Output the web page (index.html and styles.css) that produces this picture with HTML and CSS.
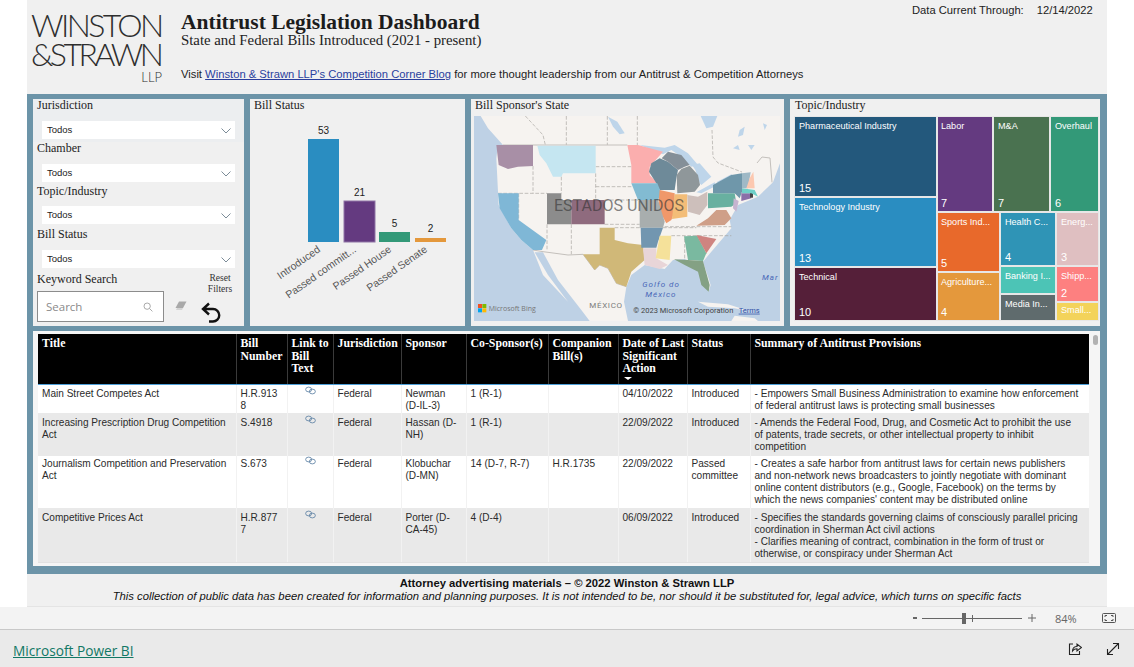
FILE: index.html
```html
<!DOCTYPE html>
<html lang="en">

<head>
    <meta charset="UTF-8">
    <meta name="viewport" content="width=device-width, initial-scale=1.0">
    <title>Antitrust Legislation Dashboard</title>
    <link rel="stylesheet" href="styles.css">
</head>

<body>
    <div class="report">
        <header class="top">
            <div class="logo">
                <div class="logo-line">WINSTON</div>
                <div class="logo-line logo-two">&amp;STRAWN</div>
                <div class="logo-llp">LLP</div>
            </div>
            <div class="heading">
                <h1>Antitrust Legislation Dashboard</h1>
                <h2>State and Federal Bills Introduced (2021 - present)</h2>
                <p class="visit">Visit <a href="#">Winston &amp; Strawn LLP's Competition Corner Blog</a> for more thought leadership from our Antitrust &amp; Competition Attorneys</p>
            </div>
            <div class="current"><span>Data Current Through:</span><span>12/14/2022</span></div>
        </header>

        <main class="frame">
            <div class="row-top">
                <section class="panel slicers">
                    <div class="slicer first">
                        <div class="panel-title">Jurisdiction</div>
                        <div class="dropdown">Todos<svg class="chev" viewBox="0 0 10 6"><path d="M0.5 0.5 L5 5 L9.5 0.5" /></svg></div>
                    </div>
                    <div class="slicer">
                        <div class="panel-title">Chamber</div>
                        <div class="dropdown">Todos<svg class="chev" viewBox="0 0 10 6"><path d="M0.5 0.5 L5 5 L9.5 0.5" /></svg></div>
                    </div>
                    <div class="slicer">
                        <div class="panel-title">Topic/Industry</div>
                        <div class="dropdown">Todos<svg class="chev" viewBox="0 0 10 6"><path d="M0.5 0.5 L5 5 L9.5 0.5" /></svg></div>
                    </div>
                    <div class="slicer">
                        <div class="panel-title">Bill Status</div>
                        <div class="dropdown">Todos<svg class="chev" viewBox="0 0 10 6"><path d="M0.5 0.5 L5 5 L9.5 0.5" /></svg></div>
                    </div>
                    <div class="search-row">
                        <div class="search-col">
                            <div class="panel-title">Keyword Search</div>
                            <div class="search-box">
                                <span>Search</span>
                                <svg class="lens" viewBox="0 0 12 12"><circle cx="5" cy="5" r="3.8" /><path d="M8 8 L11.3 11.3" /></svg>
                            </div>
                        </div>
                        <svg class="eraser" viewBox="0 0 12 10"><path d="M4 0.5 H11.5 L8 7 H0.5 Z" fill="#a9a9a9" /><path d="M2 7 L1 9 H7 L8 7 Z" fill="#d4d4d4" /></svg>
                        <div class="reset">
                            <div class="reset-text">Reset<br>Filters</div>
                            <svg class="undo" viewBox="0 0 20 21"><path d="M8 1.5 L2 7 L8 12.5 M2 7 H12 A6 6 0 0 1 12 19.5 H8" /></svg>
                        </div>
                    </div>
                </section>

                <section class="panel status">
                    <div class="panel-title">Bill Status</div>
                    <svg class="bars" viewBox="0 0 215 210" width="215" height="210">
                        <rect x="58" y="26" width="31" height="103" fill="#2a8dc1" />
                        <rect x="94" y="88" width="31" height="41" fill="#643a80" stroke="#8f74a5" stroke-width="1" />
                        <rect x="129" y="119" width="31" height="10" fill="#339978" />
                        <rect x="165" y="125" width="31" height="4" fill="#e4983c" />
                        <g class="bar-val">
                            <text x="73.5" y="21">53</text>
                            <text x="109.5" y="83">21</text>
                            <text x="144.5" y="114">5</text>
                            <text x="180.5" y="119">2</text>
                        </g>
                        <g class="bar-cat">
                            <text transform="translate(71 138) rotate(-35)">Introduced</text>
                            <text transform="translate(107 138) rotate(-35)">Passed committ...</text>
                            <text transform="translate(142 138) rotate(-35)">Passed House</text>
                            <text transform="translate(178 138) rotate(-35)">Passed Senate</text>
                        </g>
                    </svg>
                </section>

                <section class="panel mapbox">
                    <div class="panel-title">Bill Sponsor's State</div>
                    <svg class="map" viewBox="18 63 918 615" width="306" height="205">
                        <rect x="18" y="63" width="918" height="615" fill="#bed1e5" />
                        <g class="map-soft">
                            <!-- land -->
                            <path fill="#f6f3f0" d="M38 63 L60 100 L105 150 L90 150 L85 190 L90 290 L92 330 L130 400 L160 435 L195 465 L225 540 L300 620 L240 540 L200 472 L225 472 L270 555 L340 645 L365 678 L480 678 L468 620 L475 575 L490 540 L530 510 L590 522 L615 495 L650 492 L690 510 L722 590 L728 570 L705 500 L730 470 L790 400 L785 375 L810 330 L870 305 L915 262 L936 205 L936 63 Z" />
                            <path fill="#f6f3f0" d="M690 620 L780 628 L850 650 L800 640 L720 635 Z M790 678 L800 662 L860 670 L870 678 Z" />
                            <!-- lakes -->
                            <g fill="#bed5ea">
                                <path d="M515 150 L590 158 L620 150 L660 175 L690 210 L670 215 L640 185 L610 165 L585 178 Z" />
                                <path d="M672 210 L695 205 L730 245 L700 270 L695 265 L682 225 Z" />
                                <path d="M685 292 L740 262 L745 272 L700 295 Z" />
                                <path d="M745 262 L790 238 L800 245 L760 268 Z" />
                                <path d="M698 63 L748 63 L735 95 L715 100 Z" />
                                <path d="M420 65 L448 80 L470 115 L455 118 L435 95 Z" />
                                <path d="M815 105 L830 95 L825 120 L810 125 Z" />
                                <path d="M885 85 L897 90 L890 105 Z" />
                                <path d="M795 160 L810 150 L815 165 Z" />
                                <path d="M840 150 L860 150 L850 165 Z" />
                            </g>
                            <!-- borders -->
                            <g class="map-lines">
                                <path d="M172 63 L225 120 L232 150 M295 63 V150 M418 63 V150 M508 63 V150 M732 105 L735 186 L750 204 L822 231" />
                                <path d="M195 213 V295 M90 295 H237 M237 388 V465 M310 388 V478 M383 235 V315 M383 215 H490 M383 275 H490 M410 315 H510 M410 388 H515 M440 398 H515 M610 422 H790 M590 395 H790 M650 490 V425" />
                                <path d="M152 295 V375 M280 245 V295 M585 398 H685" />
                            </g>
                            <path class="map-border" d="M195 465 L225 470 L300 480 L345 478 L380 525 L395 510 L420 520 L445 565 L475 575 M105 150 H478 M867 204 L882 186 L906 189 L912 262" />
                            <!-- states with data -->
                            <path fill="#a88fa6" d="M85 150 H195 V213 L150 215 L120 222 L92 210 Z" />
                            <path fill="#c5e6f1" d="M208 152 H383 V235 H285 L280 245 H255 L235 205 L215 180 Z" />
                            <path fill="#7fb7d6" d="M90 295 H152 V375 L235 435 L222 465 H195 L160 435 L130 400 L95 340 Z" />
                            <path fill="#8c8c8c" d="M237 295 H280 V315 H310 V388 H237 Z" />
                            <path fill="#8f6b7e" d="M310 315 H410 V388 H310 Z" />
                            <path fill="#d0b878" d="M395 398 H440 V435 L480 445 L525 450 L530 495 L490 530 L475 575 L445 565 L420 520 L395 510 L380 525 L345 478 H395 Z" />
                            <path fill="#fbaeae" d="M478 150 H510 L585 170 L545 215 V240 L568 265 H490 V210 Z" />
                            <path fill="#6e8a99" d="M543 230 L550 205 L575 190 L600 200 L630 225 L625 250 L620 285 H575 L565 265 Z" />
                            <path fill="#848f98" d="M581 190 L600 170 L640 180 L665 210 L650 215 L630 225 L600 200 Z" />
                            <path fill="#8f979a" d="M626 240 L640 222 L665 212 L690 240 L696 270 L680 290 L628 295 Z" />
                            <path fill="#82bbd2" d="M490 265 H568 L580 295 L570 315 H510 Z" />
                            <path fill="#f0986a" d="M575 285 L620 295 V350 L610 375 L595 385 L570 340 Z" />
                            <path fill="#f3bd78" d="M620 298 H658 V365 L612 372 Z" />
                            <path fill="#cdbfbb" d="M658 300 L690 305 L718 290 V330 L695 360 L660 350 Z" />
                            <path fill="#a8aeae" d="M515 315 H570 L590 380 L585 398 H515 Z" />
                            <path fill="#7296b0" d="M518 398 H585 L570 440 L565 458 H520 Z" />
                            <path fill="#e8d5d8" d="M525 460 H565 V490 L600 510 L575 522 L530 510 Z" />
                            <path fill="#f5e19a" d="M575 422 H610 L605 495 L580 492 L563 490 Z" />
                            <path fill="#7ab9a0" d="M648 424 L688 422 L715 475 L705 498 L660 495 Z" />
                            <path fill="#cf8480" d="M685 420 L745 432 L715 475 Z" />
                            <path fill="#84a184" d="M618 493 L660 495 L705 498 L725 570 L722 590 L700 570 L690 530 L650 510 Z" />
                            <path fill="#cf9f88" d="M685 392 L720 370 L745 345 H775 L790 370 L770 390 Z" />
                            <path fill="#68b0a0" d="M720 295 H800 L805 325 L790 335 L720 340 Z" />
                            <path fill="#6f97aa" d="M735 270 L790 240 L822 235 V290 L815 310 L800 295 H735 Z" />
                            <path fill="#c6b4d0" d="M797 310 L812 318 L805 350 L795 340 Z" />
                            <path fill="#8b6fa8" d="M820 295 H850 V310 L820 318 Z" />
                            <path fill="#444444" d="M846 294 H855 V308 H846 Z" />
                            <path fill="#6fd0c8" d="M822 280 L860 285 L870 305 L850 295 H822 Z" />
                            <path fill="#9fb9c6" d="M822 235 L848 232 L840 280 H822 Z" />
                            <path fill="#fcc8b0" d="M856 230 L860 280 H835 L845 250 Z" />
                        </g>
                        <text class="map-country" x="258" y="347">ESTADOS UNIDOS</text>
                        <text class="map-sea" x="523" y="577">Golfo do</text>
                        <text class="map-sea" x="532" y="605">México</text>
                        <text class="map-sea" x="882" y="556">Mar</text>
                        <text class="map-mex" x="364" y="638">MÉXICO</text>
                        <rect x="30" y="627" width="12" height="12" fill="#f25022" />
                        <rect x="43" y="627" width="12" height="12" fill="#7fba00" />
                        <rect x="30" y="640" width="12" height="12" fill="#00a4ef" />
                        <rect x="43" y="640" width="12" height="12" fill="#ffb900" />
                        <text class="map-bing" x="62" y="647">Microsoft Bing</text>
                        <text class="map-copy" x="496" y="653">© 2023 Microsoft Corporation</text>
                        <text class="map-terms" x="812" y="653">Terms</text>
                    </svg>
                </section>

                <section class="panel topic">
                    <div class="panel-title">Topic/Industry</div>
                    <div class="treemap">
                        <div class="tm-col tm-big">
                            <div class="tile t-pharma"><span>Pharmaceutical Industry</span><span>15</span></div>
                            <div class="tile t-tech"><span>Technology Industry</span><span>13</span></div>
                            <div class="tile t-technical"><span>Technical</span><span>10</span></div>
                        </div>
                        <div class="tm-rest">
                            <div class="tm-row tm-upper">
                                <div class="tile t-labor"><span>Labor</span><span>7</span></div>
                                <div class="tile t-ma"><span>M&amp;A</span><span>7</span></div>
                                <div class="tile t-over"><span>Overhaul</span><span>6</span></div>
                            </div>
                            <div class="tm-row tm-lower">
                                <div class="tm-col tm-a">
                                    <div class="tile t-sports"><span>Sports Ind...</span><span>5</span></div>
                                    <div class="tile t-agri"><span>Agriculture...</span><span>4</span></div>
                                </div>
                                <div class="tm-col tm-b">
                                    <div class="tile t-health"><span>Health C...</span><span>4</span></div>
                                    <div class="tile t-bank"><span>Banking I...</span></div>
                                    <div class="tile t-media"><span>Media In...</span></div>
                                </div>
                                <div class="tm-col tm-c">
                                    <div class="tile t-energy"><span>Energ...</span><span>3</span></div>
                                    <div class="tile t-ship"><span>Shipp...</span><span>2</span></div>
                                    <div class="tile t-small"><span>Small...</span></div>
                                </div>
                            </div>
                        </div>
                    </div>
                </section>
            </div>

            <section class="panel bills">
                <table class="bill-table">
                    <colgroup>
                        <col class="c-title">
                        <col class="c-num">
                        <col class="c-link">
                        <col class="c-jur">
                        <col class="c-spon">
                        <col class="c-co">
                        <col class="c-comp">
                        <col class="c-date">
                        <col class="c-status">
                        <col>
                    </colgroup>
                    <thead>
                        <tr>
                            <th>Title</th>
                            <th>Bill Number</th>
                            <th>Link to Bill Text</th>
                            <th>Jurisdiction</th>
                            <th>Sponsor</th>
                            <th>Co-Sponsor(s)</th>
                            <th>Companion Bill(s)</th>
                            <th>Date of Last Significant Action<i class="sort"></i></th>
                            <th>Status</th>
                            <th>Summary of Antitrust Provisions</th>
                        </tr>
                    </thead>
                    <tbody>
                        <tr class="r1">
                            <td>Main Street Competes Act</td>
                            <td class="num">H.R.9138</td>
                            <td class="lnk"><svg class="chain" viewBox="0 0 12 9"><ellipse cx="4" cy="3.4" rx="3.3" ry="2.6" /><ellipse cx="8" cy="5.6" rx="3.3" ry="2.6" /></svg></td>
                            <td>Federal</td>
                            <td>Newman<br>(D-IL-3)</td>
                            <td>1 (R-1)</td>
                            <td></td>
                            <td>04/10/2022</td>
                            <td>Introduced</td>
                            <td class="sum">- Empowers Small Business Administration to examine how enforcement of federal antitrust laws is protecting small businesses</td>
                        </tr>
                        <tr class="r2">
                            <td>Increasing Prescription Drug Competition Act</td>
                            <td class="num">S.4918</td>
                            <td class="lnk"><svg class="chain" viewBox="0 0 12 9"><ellipse cx="4" cy="3.4" rx="3.3" ry="2.6" /><ellipse cx="8" cy="5.6" rx="3.3" ry="2.6" /></svg></td>
                            <td>Federal</td>
                            <td>Hassan (D-NH)</td>
                            <td>1 (R-1)</td>
                            <td></td>
                            <td>22/09/2022</td>
                            <td>Introduced</td>
                            <td class="sum">- Amends the Federal Food, Drug, and Cosmetic Act to prohibit the use of patents, trade secrets, or other intellectual property to inhibit competition</td>
                        </tr>
                        <tr class="r3">
                            <td>Journalism Competition and Preservation Act</td>
                            <td class="num">S.673</td>
                            <td class="lnk"><svg class="chain" viewBox="0 0 12 9"><ellipse cx="4" cy="3.4" rx="3.3" ry="2.6" /><ellipse cx="8" cy="5.6" rx="3.3" ry="2.6" /></svg></td>
                            <td>Federal</td>
                            <td>Klobuchar (D-MN)</td>
                            <td>14 (D-7, R-7)</td>
                            <td>H.R.1735</td>
                            <td>22/09/2022</td>
                            <td>Passed committee</td>
                            <td class="sum">- Creates a safe harbor from antitrust laws for certain news publishers and non-network news broadcasters to jointly negotiate with dominant online content distributors (e.g., Google, Facebook) on the terms by which the news companies' content may be distributed online</td>
                        </tr>
                        <tr class="r4">
                            <td>Competitive Prices Act</td>
                            <td class="num">H.R.8777</td>
                            <td class="lnk"><svg class="chain" viewBox="0 0 12 9"><ellipse cx="4" cy="3.4" rx="3.3" ry="2.6" /><ellipse cx="8" cy="5.6" rx="3.3" ry="2.6" /></svg></td>
                            <td>Federal</td>
                            <td>Porter (D-CA-45)</td>
                            <td>4 (D-4)</td>
                            <td></td>
                            <td>06/09/2022</td>
                            <td>Introduced</td>
                            <td class="sum">- Specifies the standards governing claims of consciously parallel pricing coordination in Sherman Act civil actions<br>- Clarifies meaning of contract, combination in the form of trust or otherwise, or conspiracy under Sherman Act</td>
                        </tr>
                    </tbody>
                </table>
                <div class="scroll"><div class="thumb"></div></div>
            </section>
        </main>

        <footer class="notes">
            <p class="note-bold">Attorney advertising materials – © 2022 Winston &amp; Strawn LLP</p>
            <p class="note-it">This collection of public data has been created for information and planning purposes. It is not intended to be, nor should it be substituted for, legal advice, which turns on specific facts</p>
        </footer>
    </div>

    <div class="zoombar">
        <span class="zb-minus"></span>
        <div class="slider"><i class="tick"></i><i class="handle"></i></div>
        <svg class="zb-plus" viewBox="0 0 8 8"><path d="M4 0 V8 M0 4 H8" /></svg>
        <span class="pct">84%</span>
        <svg class="fit" viewBox="0 0 14 10"><rect x="0.5" y="0.5" width="13" height="9" rx="1" /><path d="M3 4 V2.5 H5 M9 2.5 H11 V4 M11 6 V7.5 H9 M5 7.5 H3 V6" /></svg>
    </div>

    <div class="bottom">
        <a class="pbi" href="#">Microsoft Power BI</a>
        <div class="bottom-icons">
            <svg class="share" viewBox="0 0 14 14"><path d="M5 2 H1.5 V12.5 H11.5 V9" /><path d="M4.5 9 C4.5 6 6.5 4.5 9 4.5 V2 L13.5 5.5 L9 9 V6.8 C7 6.8 5.5 7.5 4.5 9 Z" /></svg>
            <svg class="expand" viewBox="0 0 14 14"><path d="M1.5 12.5 L12.5 1.5 M7 1.5 H12.5 V7 M1.5 7 V12.5 H7" /></svg>
        </div>
    </div>
</body>

</html>
```

FILE: styles.css
```css
html,
body {
    margin: 0;
    padding: 0;
}

body {
    width: 1134px;
    height: 667px;
    overflow: hidden;
    background-color: #fff;
    font-family: "Liberation Sans", Arial, sans-serif;
}

.report {
    margin-left: 27px;
    width: 1080px;
    height: 607px;
    background-color: #f0f0f0;
    display: flex;
    flex-direction: column;
}

/* header */
.top {
    height: 94px;
    display: flex;
    position: relative;
    box-sizing: border-box;
}

.logo {
    width: 154px;
    padding-left: 4px;
    box-sizing: border-box;
    font-family: Lato, "Open Sans", sans-serif;
    font-weight: 300;
    color: #2e2e2e;
}

.logo-line {
    font-size: 32px;
    line-height: 29px;
    letter-spacing: -2.6px;
    white-space: nowrap;
}

.logo-two {
    letter-spacing: -3.5px;
}

.logo-line:first-child {
    margin-top: 10px;
}

.logo-llp {
    font-size: 13px;
    line-height: 13px;
    margin-top: 3px;
    width: 131px;
    text-align: right;
}

.heading {
    padding-top: 11px;
}

h1 {
    margin: 0;
    font-family: "Liberation Serif", serif;
    font-size: 21.5px;
    line-height: 22px;
    font-weight: bold;
    color: #1c1c1c;
}

h2 {
    margin: -1px 0 0;
    font-family: "Liberation Serif", serif;
    font-size: 14.8px;
    line-height: 16px;
    font-weight: normal;
    color: #222;
}

.visit {
    margin: 20px 0 0;
    font-size: 11.23px;
    line-height: 13px;
    color: #222;
    white-space: nowrap;
}

.visit a {
    color: #2a3f9e;
}

.current {
    position: absolute;
    top: 4px;
    left: 885px;
    display: flex;
    gap: 13px;
    font-size: 11.2px;
    line-height: 13px;
    color: #222;
}

/* blue frame */
.frame {
    height: 480px;
    box-sizing: border-box;
    padding: 5px 7px 7px 6px;
    background-color: #6c94a8;
    display: flex;
    flex-direction: column;
    gap: 5px;
}

.row-top {
    height: 227px;
    display: flex;
    gap: 6px;
}

.panel {
    background-color: #f0f0f0;
}

.panel-title {
    font-family: "Liberation Serif", serif;
    font-size: 12px;
    line-height: 12px;
    color: #222;
}

/* slicers */
.slicers {
    width: 211px;
    display: flex;
    flex-direction: column;
}

.slicer {
    padding-left: 4px;
    height: 43px;
    box-sizing: border-box;
}

.slicer.first {
    background-color: #eceef0;
}

.dropdown {
    margin: 2px 0 0 5px;
    width: 193px;
    height: 18px;
    background-color: #fff;
    box-sizing: border-box;
    padding-left: 5px;
    font-size: 9.5px;
    line-height: 18px;
    color: #222;
    display: flex;
    justify-content: space-between;
    align-items: center;
    position: relative;
}

.slicer .panel-title {
    height: 20px;
}

.slicer:nth-child(3) .panel-title {
    height: 19px;
}

.chev {
    width: 10px;
    height: 6px;
    margin-right: 4px;
    margin-top: 2px;
    fill: none;
    stroke: #6d7f8c;
    stroke-width: 0.9;
}

.search-row {
    display: flex;
    align-items: flex-start;
    padding: 1px 0 0 4px;
}

.search-col .panel-title {
    height: 19px;
    line-height: 14px;
}

.search-box {
    width: 127px;
    height: 31px;
    box-sizing: border-box;
    border: 1px solid #8c8c8c;
    background-color: #fff;
    padding: 0 10px 0 8px;
    display: flex;
    align-items: center;
    justify-content: space-between;
    font-family: "Open Sans", sans-serif;
    font-size: 11.5px;
    color: #8a8a8a;
}

.lens {
    width: 10px;
    height: 10px;
    fill: none;
    stroke: #999;
    stroke-width: 1;
}

.eraser {
    width: 12px;
    height: 10px;
    margin: 29px 0 0 11px;
}

.reset {
    margin-left: 10px;
    margin-top: 1px;
    width: 46px;
    text-align: center;
}

.reset-text {
    font-family: "Liberation Serif", serif;
    font-size: 9.5px;
    line-height: 11px;
    color: #333;
    margin-bottom: 7px;
}

.undo {
    display: block;
    margin-left: 4px;
    width: 20px;
    height: 21px;
    fill: none;
    stroke: #111;
    stroke-width: 2.4;
}

/* bar chart */
.status {
    width: 215px;
}

.status .panel-title {
    padding-left: 4px;
}

.bars {
    display: block;
    margin-top: 2px;
    overflow: visible;
}

.bar-val text {
    font-size: 10px;
    fill: #222;
    text-anchor: middle;
}

.bar-cat text {
    font-size: 10.5px;
    fill: #555;
    text-anchor: end;
}

/* map */
.mapbox {
    width: 313px;
    padding-left: 3px;
    box-sizing: border-box;
}

.mapbox .panel-title {
    height: 17px;
    padding-left: 1px;
}

.map {
    display: block;
}

.map-soft {
    filter: blur(0.4px);
}

.map-lines {
    fill: none;
    stroke: #a8a4a0;
    stroke-width: 2;
    stroke-dasharray: 11 5;
}

.map-border {
    fill: none;
    stroke: #c4c0bc;
    stroke-width: 3;
}

.map-country {
    font-family: Roboto, sans-serif;
    font-size: 48px;
    fill: #333;
    fill-opacity: 0.62;
}

.map-sea {
    font-family: Roboto, sans-serif;
    font-size: 24px;
    font-style: italic;
    letter-spacing: 3px;
    fill: #4a68b8;
}

.map-mex {
    font-family: Roboto, sans-serif;
    font-size: 24px;
    letter-spacing: 2px;
    fill: #7b7b7b;
}

.map-bing {
    font-family: "Open Sans", sans-serif;
    font-size: 21px;
    fill: #767676;
}

.map-copy {
    font-family: Roboto, sans-serif;
    font-size: 22.5px;
    fill: #444;
}

.map-terms {
    font-family: Roboto, sans-serif;
    font-size: 22.5px;
    fill: #3050a8;
    text-decoration: underline;
}

/* treemap */
.topic {
    width: 310px;
    padding-left: 4px;
    box-sizing: border-box;
}

.topic .panel-title {
    height: 17px;
    padding-left: 1px;
}

.treemap {
    width: 305px;
    height: 205px;
    display: flex;
    color: #fff;
    font-size: 9.1px;
}

.tm-col {
    display: flex;
    flex-direction: column;
}

.tm-big {
    width: 143px;
}

.tm-rest {
    flex: 1;
    display: flex;
    flex-direction: column;
}

.tm-row {
    display: flex;
}

.tm-upper {
    height: 96px;
}

.tm-lower {
    height: 109px;
}

.tile {
    box-sizing: border-box;
    border: 1px solid #e7e7e7;
    padding: 3px 3px 2px 4px;
    display: flex;
    flex-direction: column;
    justify-content: space-between;
    white-space: nowrap;
    overflow: hidden;
    line-height: 12px;
}

.tile span:last-child:not(:first-child) {
    font-size: 11px;
}

.t-pharma {
    height: 81px;
    background-color: #23587c;
}

.t-tech {
    height: 70px;
    background-color: #2a8dc1;
}

.t-technical {
    height: 54px;
    background-color: #551f39;
}

.t-labor {
    width: 56px;
    padding-left: 3px;
    background-color: #643a80;
}

.t-ma {
    width: 57px;
    background-color: #4a7250;
}

.t-over {
    width: 49px;
    background-color: #339978;
}

.tm-a {
    width: 63px;
}

.tm-b {
    width: 56px;
}

.tm-c {
    width: 43px;
}

.t-sports {
    height: 60px;
    padding-left: 3px;
    background-color: #e8692b;
}

.t-agri {
    height: 49px;
    padding-left: 3px;
    background-color: #e4983c;
}

.t-health {
    height: 54px;
    background-color: #2f94b6;
}

.t-bank {
    height: 28px;
    background-color: #4cc4b6;
}

.t-media {
    height: 27px;
    background-color: #5f6b6d;
}

.t-energy {
    height: 54px;
    background-color: #dfbfc1;
}

.t-ship {
    height: 36px;
    background-color: #fd8080;
}

.t-small {
    height: 19px;
    background-color: #f3d35a;
    padding-top: 1px;
}

/* table */
.bills {
    height: 235px;
    box-sizing: border-box;
    padding: 3px 0 0 5px;
    background-color: #f5f5f5;
    display: flex;
    position: relative;
    overflow: hidden;
}

.bill-table {
    width: 1051px;
    height: 228px;
    table-layout: fixed;
    border-collapse: collapse;
    font-size: 10.08px;
    line-height: 12px;
    color: #2b2b2b;
}

.c-title {
    width: 198px;
}

.c-num {
    width: 51px;
}

.c-link {
    width: 46px;
}

.c-jur {
    width: 68px;
}

.c-spon {
    width: 65px;
}

.c-co {
    width: 82px;
}

.c-comp {
    width: 70px;
}

.c-date {
    width: 69px;
}

.c-status {
    width: 63px;
}

.bill-table th {
    height: 50px;
    box-sizing: border-box;
    background-color: #000;
    color: #fff;
    font-family: "Liberation Serif", serif;
    font-size: 11.8px;
    line-height: 12.5px;
    font-weight: bold;
    text-align: left;
    vertical-align: top;
    padding: 3px 2px 0 4px;
    border-left: 1px solid #3a3a3a;
    border-bottom: 1px solid #4d9fd8;
    overflow: hidden;
}

.bill-table th:first-child {
    border-left: 0;
}

.sort {
    display: block;
    width: 0;
    height: 0;
    margin: 2px 0 0 1px;
    border-left: 4px solid transparent;
    border-right: 4px solid transparent;
    border-top: 3px solid #fff;
}

.bill-table td {
    vertical-align: top;
    padding: 3px 3px 0 4px;
    border-left: 1px solid #f2f2f2;
    overflow: hidden;
}

.bill-table td:first-child {
    border-left: 0;
}

.bill-table td.num {
    padding-right: 5px;
    word-break: break-all;
}

.bill-table td.sum {
    padding-right: 8px;
}

.lnk {
    text-align: center;
}

.chain {
    display: block;
    width: 11px;
    height: 9px;
    margin: -2px auto 0;
    fill: none;
    stroke: #5b7fa3;
    stroke-width: 0.9;
}

.r1 td {
    height: 29px;
    box-sizing: border-box;
    background-color: #fff;
}

.r2 td {
    height: 43px;
    box-sizing: border-box;
    padding-top: 4px;
    background-color: #e9e9e9;
}

.r3 td {
    height: 52px;
    box-sizing: border-box;
    padding-top: 2px;
    background-color: #fff;
}

.r4 td {
    height: 54px;
    box-sizing: border-box;
    padding-top: 4px;
    background-color: #e9e9e9;
    border-bottom: 1px solid #e2e2e2;
}

.scroll {
    width: 11px;
}

.thumb {
    width: 5px;
    height: 10px;
    margin: 1px 0 0 4px;
    border-radius: 3px;
    background-color: #b2b2b2;
}

/* footer of report */
.notes {
    flex: 1;
    text-align: center;
    color: #111;
    font-size: 11.25px;
    line-height: 13px;
    padding-top: 3px;
    border-bottom: 1px solid #e4e4e4;
}

.notes p {
    margin: 0;
}

.note-bold {
    font-weight: bold;
}

.note-it {
    font-style: italic;
}

/* zoom bar */
.zoombar {
    height: 23px;
    background-color: #f3f3f3;
    border-bottom: 1px solid #c8c8c8;
    box-sizing: border-box;
    display: flex;
    align-items: center;
    padding-left: 913px;
}

.zb-minus {
    width: 4px;
    height: 2px;
    background-color: #666;
}

.slider {
    width: 100px;
    height: 1px;
    margin-left: 5px;
    background-color: #666;
    position: relative;
}

.handle {
    position: absolute;
    left: 40px;
    top: -5px;
    width: 4px;
    height: 11px;
    background-color: #666;
}

.tick {
    position: absolute;
    left: 50px;
    top: -3px;
    width: 1px;
    height: 7px;
    background-color: #666;
}

.zb-plus {
    width: 8px;
    height: 8px;
    margin-left: 6px;
    fill: none;
    stroke: #666;
    stroke-width: 1;
}

.pct {
    margin-left: 19px;
    width: 24px;
    font-family: "Open Sans", sans-serif;
    font-size: 11px;
    color: #666;
}

.fit {
    margin-left: 23px;
    width: 14px;
    height: 10px;
    fill: none;
    stroke: #555;
    stroke-width: 1;
}

/* power bi strip */
.bottom {
    height: 37px;
    background-color: #eaeaea;
    display: flex;
    align-items: center;
    justify-content: space-between;
    padding: 0 14px 0 13px;
}

.pbi {
    font-family: "Open Sans", sans-serif;
    font-size: 13.7px;
    padding-top: 3px;
    color: #117865;
}

.bottom-icons {
    display: flex;
    gap: 24px;
}

.share,
.expand {
    width: 14px;
    height: 14px;
    fill: none;
    stroke: #222;
    stroke-width: 1.1;
}
```
